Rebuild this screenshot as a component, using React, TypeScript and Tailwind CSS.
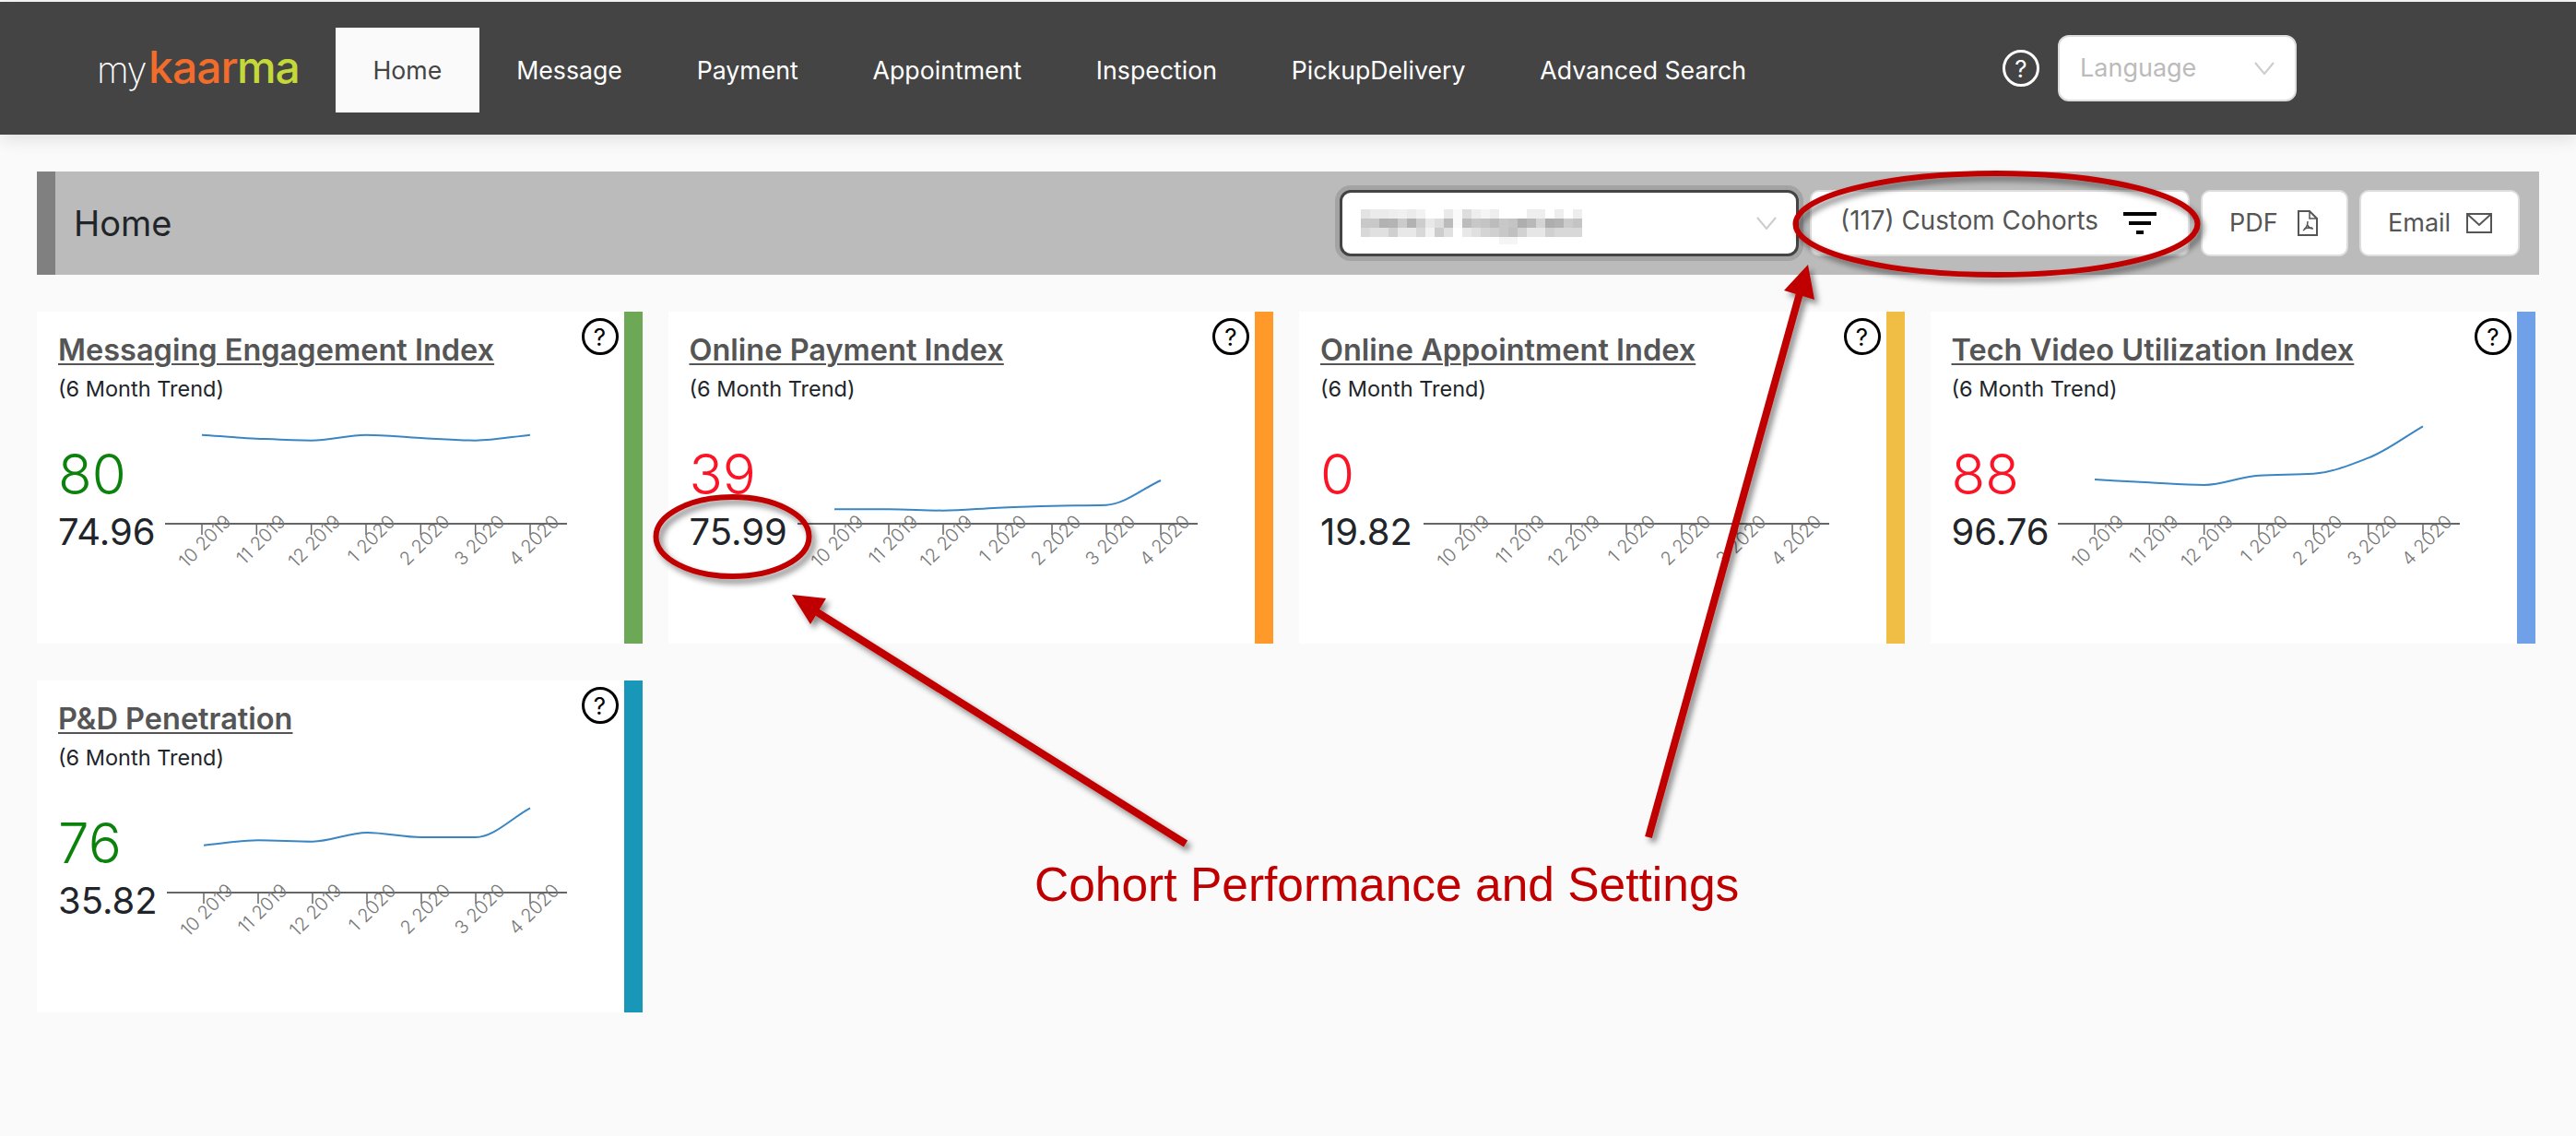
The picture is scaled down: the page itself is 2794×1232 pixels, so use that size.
const months = ['10 2019', '11 2019', '12 2019', '1 2020', '2 2020', '3 2020', '4 2020']

const mosaic = [
  ['#e3e3e3', '#ebebeb', '#ebebeb', '#eeeeee', '#f0f0f0', '#ebebeb', '#f2f2f2', '#ffffff', '#ffffff', '#eaeaea', '#fafafa', '#dddddd', '#eeeeee', '#f5f5f5', '#eeeeee', '#ffffff', '#ffffff', '#ffffff', '#eeeeee', '#eeeeee', '#ffffff', '#eeeeee', '#ffffff', '#eeeeee'],
  ['#c8c8c8', '#c8c8c8', '#b2b2b2', '#b4b4b4', '#cbcbcb', '#b2b2b2', '#cdcdcd', '#e8e8e8', '#dddddd', '#bbbbbb', '#fafafa', '#bcbcbc', '#c8c8c8', '#c4c4c4', '#bcbcbc', '#c8c8c8', '#c4c4c4', '#aeaeae', '#b8b8b8', '#d4d4d4', '#aeaeae', '#b2b2b2', '#cbcbcb', '#c4c4c4'],
  ['#d8d8d8', '#e0e0e0', '#e0e0e0', '#d0d0d0', '#e8e8e8', '#e8e8e8', '#d8d8d8', '#f2f2f2', '#cccccc', '#e0e0e0', '#ffffff', '#e8e8e8', '#e0e0e0', '#d4d4d4', '#d0d0d0', '#c8c8c8', '#c0c0c0', '#d2d2d2', '#e6e6e6', '#e6e6e6', '#d0d0d0', '#d8d8d8', '#d8d8d8', '#d8d8d8'],
]

const cards = [
  { title: 'Messaging Engagement Index', value: '80', good: true, cohort: '74.96', accent: 'bg-[#6ca855]', chartWidth: 436, line: [455, 467, 473, 455, 465, 473, 455] },
  { title: 'Online Payment Index', value: '39', good: false, cohort: '75.99', accent: 'bg-[#ff9a2a]', chartWidth: 434, line: [697, 697, 701, 692, 686, 683, 603] },
  { title: 'Online Appointment Index', value: '0', good: false, cohort: '19.82', accent: 'bg-[#f1be45]', chartWidth: 440, line: [] },
  { title: 'Tech Video Utilization Index', value: '88', good: false, cohort: '96.76', accent: 'bg-[#70a0e8]', chartWidth: 436, line: [600, 610, 618, 587, 581, 530, 427] },
  { title: 'P&D Penetration', value: '76', good: true, cohort: '35.82', accent: 'bg-[#1997b8]', chartWidth: 434, line: [590, 574, 578, 549, 564, 564, 469] },
]

// monotone curve through the points, same look as the d3 line on the real page
function trendPath(pts: [number, number][]) {
  if (pts.length === 0) return ''
  const sec = pts.slice(1).map((p, i) => (p[1] - pts[i][1]) / (p[0] - pts[i][0]))
  const tan = pts.map((_, i) => {
    if (i === 0) return sec[0]
    if (i === pts.length - 1) return sec[i - 1]
    if (sec[i - 1] * sec[i] <= 0) return 0
    return (2 * sec[i - 1] * sec[i]) / (sec[i - 1] + sec[i])
  })
  let d = `M${pts[0][0]} ${pts[0][1]}`
  for (let i = 1; i < pts.length; i++) {
    const dx = (pts[i][0] - pts[i - 1][0]) / 3
    d += ` C${pts[i - 1][0] + dx} ${pts[i - 1][1] + tan[i - 1] * dx} ${pts[i][0] - dx} ${pts[i][1] - tan[i] * dx} ${pts[i][0]} ${pts[i][1]}`
  }
  return d
}

function Trend({ width, line }: { width: number; line: number[] }) {
  const step = (width - 80) / 6
  const ticks = months.map((_, i) => 40 + i * step)
  const pts = line.map((v, i) => [ticks[i], v / 3 - 130] as [number, number])
  return (
    <svg width={width} height={180} className="-mt-[28px] shrink-0">
      <path d={trendPath(pts)} fill="none" stroke="#3a86c4" strokeWidth="2" />
      <line x1="0" x2={width} y1="118" y2="118" stroke="#666666" strokeWidth="2" />
      {ticks.map((x, i) => (
        <g key={months[i]}>
          <line x1={x} x2={x} y1="118" y2="130" stroke="#666666" strokeWidth="1.5" />
          <text
            transform={`translate(${x + 33} 117) rotate(-45)`}
            textAnchor="end"
            className="fill-[#777777] text-[20px] font-light"
          >
            {months[i]}
          </text>
        </g>
      ))}
    </svg>
  )
}

function HelpIcon({ light }: { light?: boolean }) {
  return (
    <div
      className={
        light
          ? 'flex h-10 w-10 shrink-0 items-center justify-center rounded-full border-[3px] border-white text-[26px] text-white'
          : 'flex h-10 w-10 shrink-0 items-center justify-center rounded-full border-[3px] border-black text-[26px] text-black'
      }
    >
      ?
    </div>
  )
}

function Chevron() {
  return (
    <svg width="22" height="14" viewBox="0 0 22 14" className="shrink-0">
      <path d="M1 1 L11 13 L21 1" fill="none" stroke="#cccccc" strokeWidth="2" />
    </svg>
  )
}

function IndexCard({ card }: { card: (typeof cards)[number] }) {
  return (
    <div className="flex h-[360px] bg-white">
      <div className="min-w-0 flex-1">
        <div className="flex items-start justify-between pl-[23px] pr-[6px] pt-[7px]">
          <div className="pt-[11px]">
            <div className="text-[32.5px] font-semibold leading-[48px] text-[#555555] underline underline-offset-[3px] decoration-2">
              {card.title}
            </div>
            <div className="mt-[2px] text-[23.5px] leading-[32px] text-[#212529]">(6 Month Trend)</div>
          </div>
          <HelpIcon />
        </div>
        <div className="mt-[40px] flex justify-between pl-[23px] pr-[62px]">
          <div>
            <div className={card.good ? 'text-[60px] font-[350] leading-[72px] text-[#0b820b]' : 'text-[60px] font-[350] leading-[72px] text-[#fb1326]'}>
              {card.value}
            </div>
            <div className="mt-[3px] text-[40px] leading-[48px] text-[#212529]">{card.cohort}</div>
          </div>
          <Trend width={card.chartWidth} line={card.line} />
        </div>
      </div>
      <div className={`w-5 shrink-0 ${card.accent}`} />
    </div>
  )
}

function Annotations() {
  return (
    <svg width="2794" height="1232" className="pointer-events-none absolute left-0 top-0">
      <defs>
        <filter id="callout" x="-20%" y="-20%" width="140%" height="140%">
          <feDropShadow dx="4" dy="5" stdDeviation="3" floodColor="#000000" floodOpacity="0.45" />
        </filter>
      </defs>
      <g filter="url(#callout)">
        <ellipse cx="794.5" cy="582" rx="83" ry="43" fill="none" stroke="#c00000" strokeWidth="6" />
        <ellipse cx="2165.5" cy="243" rx="218" ry="55" fill="none" stroke="#c00000" strokeWidth="6" />
        <line x1="1286" y1="915" x2="880" y2="660" stroke="#c00000" strokeWidth="8" />
        <polygon points="859,645 896,649 879,677" fill="#c00000" />
        <line x1="1788" y1="908" x2="1952" y2="318" stroke="#c00000" strokeWidth="8" />
        <polygon points="1961,287 1935,315 1968,325" fill="#c00000" />
      </g>
    </svg>
  )
}

export default function App() {
  return (
    <div className="relative h-[1232px] w-[2794px] overflow-hidden bg-[#fafafa] pt-[2px] font-[Inter,sans-serif]">
      <header className="flex h-[144px] items-center bg-[#444444] shadow-[0_4px_18px_rgba(0,0,0,0.12)]">
        <div className="flex w-[364px] items-baseline pl-[105px] pb-[2px]">
          <span className="text-[40px] font-extralight leading-none tracking-[-1.5px] text-white">my</span>
          <span className="ml-[3px] text-[48px] font-medium leading-none tracking-[-1px] text-[#f26c2b]">kaar</span>
          <span className="text-[48px] font-medium leading-none tracking-[-1px] text-[#c5d83a]">ma</span>
        </div>
        <nav className="mt-[4px] flex items-center text-[26.7px] text-white">
          <a className="flex h-[92px] items-center bg-[#fafafa] px-[40.5px] text-[#444444]">Home</a>
          <a className="px-[40.4px]">Message</a>
          <a className="px-[40.4px]">Payment</a>
          <a className="px-[40.4px]">Appointment</a>
          <a className="px-[40.4px]">Inspection</a>
          <a className="px-[40.4px]">PickupDelivery</a>
          <a className="px-[40.4px]">Advanced Search</a>
        </nav>
        <div className="ml-auto mr-[303px] flex items-center gap-[20px]">
          <HelpIcon light />
          <div className="flex h-[72px] w-[259px] items-center justify-between rounded-[12px] border-2 border-[#dddddd] bg-white pl-[22px] pr-[22px] text-[27px] text-[#bbbbbb]">
            Language
            <Chevron />
          </div>
        </div>
      </header>

      <div className="mx-[40px] mt-[40px] flex h-[112px] items-center border-l-[20px] border-[#808080] bg-[#bbbbbb] pl-[20px] pr-[21px]">
        <h1 className="text-[38px] text-[#212529]">Home</h1>
        <div className="ml-auto flex items-center gap-[12px] text-[28px] text-[#555555]">
          <div className="flex h-[72px] w-[498px] items-center justify-between rounded-[12px] border-[3px] border-[#444444] bg-white pl-[20px] pr-[21px] shadow-[0_0_0_5px_#a3a3a3]">
            <svg width="240" height="40" className="mt-[9px]">
              {mosaic.map((row, r) =>
                row.map((fill, c) => <rect key={`${r}-${c}`} x={c * 10} y={r * 10} width="10" height="10" fill={fill} />)
              )}
              <rect x="150" y="30" width="20" height="8" fill="#f5f5f5" />
            </svg>
            <Chevron />
          </div>
          <button className="flex h-[72px] w-[412px] items-center rounded-[10px] border-2 border-[#dddddd] bg-white pl-[31px]">
            <span className="pb-[4px] text-[27.8px]">(117) Custom Cohorts</span>
            <svg width="36" height="24" className="ml-[27px]">
              <rect x="0" y="0" width="36" height="4" />
              <rect x="6" y="10" width="24" height="4" />
              <rect x="14" y="20" width="8" height="4" />
            </svg>
          </button>
          <button className="flex h-[72px] w-[160px] items-center rounded-[10px] border-2 border-[#dddddd] bg-white pl-[29px] text-[27px]">
            PDF
            <svg width="22" height="28" viewBox="0 0 22 28" className="ml-[21px]" fill="none" stroke="#555555" strokeWidth="2">
              <path d="M1 1 H13 L21 9 V27 H1 Z" />
              <path d="M13 1 V9 H21" strokeWidth="1.5" />
              <path d="M11 12 C11 16 9 20 6 22 M11 16 C12 19 14 20 17 20 M7 20 C10 19 13 19 16 19" strokeWidth="1.5" />
            </svg>
          </button>
          <button className="flex h-[72px] w-[174px] items-center rounded-[10px] border-2 border-[#dddddd] bg-white pl-[29px] text-[27px]">
            Email
            <svg width="28" height="22" viewBox="0 0 28 22" className="ml-[17px]" fill="none" stroke="#555555" strokeWidth="2">
              <rect x="1" y="1" width="26" height="20" />
              <path d="M1 1 L14 13 L27 1" />
            </svg>
          </button>
        </div>
      </div>

      <main className="ml-[40px] mt-[40px] grid w-[2710px] grid-cols-4 gap-x-[28px] gap-y-[40px]">
        {cards.map((card) => (
          <IndexCard key={card.title} card={card} />
        ))}
      </main>

      <Annotations />
      <div className="absolute left-[1122px] top-[929px] font-['Liberation_Sans',sans-serif] text-[51.5px] leading-[60px] text-[#c00000]">
        Cohort Performance and Settings
      </div>
    </div>
  )
}
